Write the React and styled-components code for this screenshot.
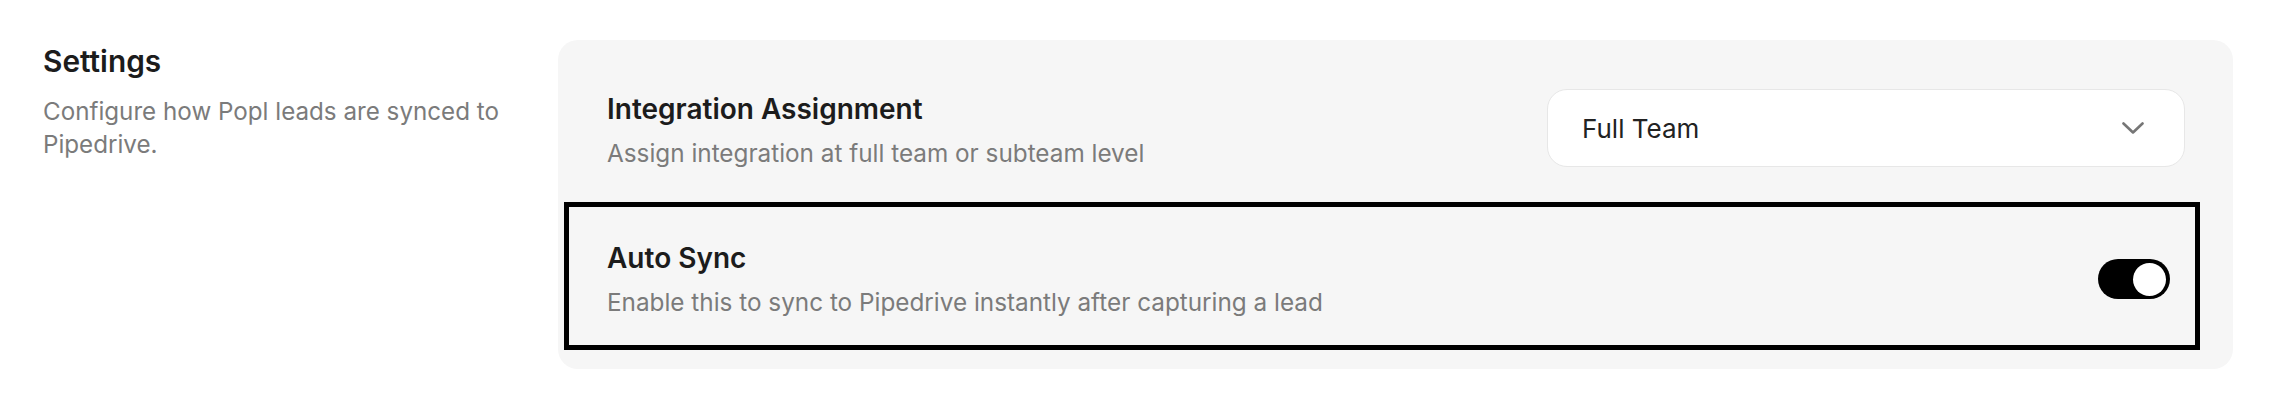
import React, { useState } from "react";
import styled, { createGlobalStyle } from "styled-components";

const GlobalStyle = createGlobalStyle`
  html, body {
    margin: 0;
    padding: 0;
    background: #ffffff;
    font-family: Inter, "Noto Sans", "Liberation Sans", sans-serif;
  }
`;

const Page = styled.div`
  display: grid;
  grid-template-columns: 480px 1fr;
  column-gap: 35px;
  padding: 40px 55px 0 43px;
`;

const Intro = styled.div`
  padding-top: 2px;
`;

const SectionTitle = styled.h2`
  margin: 0;
  font-size: 29.8px;
  line-height: 39px;
  font-weight: 600;
  color: #1c1c1c;
`;

const SectionText = styled.p`
  margin: 14px 0 0;
  font-size: 24.2px;
  line-height: 33px;
  color: #7b7b7b;
`;

const Card = styled.div`
  background: #f6f6f6;
  border-radius: 20px;
  padding: 50px 48px 19px 49px;
`;

const Row = styled.div`
  display: flex;
  justify-content: space-between;
  align-items: ${(p) => (p.$center ? "center" : "flex-start")};
  gap: 40px;
  ${(p) =>
    p.$focused &&
    `
    margin: 32px -15px 0 -43px;
    padding: 32px 25px 26px 38px;
    border: 5px solid #000;
  `}
`;

const Label = styled.div`
  display: flex;
  flex-direction: column;
  gap: 8px;
`;

const RowTitle = styled.div`
  font-size: 28px;
  line-height: 38px;
  font-weight: 600;
  color: #1c1c1c;
`;

const RowText = styled.div`
  font-size: 24.3px;
  line-height: 34px;
  color: #7b7b7b;
`;

const Select = styled.button`
  display: flex;
  align-items: center;
  justify-content: space-between;
  box-sizing: border-box;
  width: 638px;
  height: 78px;
  margin-top: -1px;
  padding: 0 40px 0 34px;
  background: #ffffff;
  border: 1.5px solid #e7e7e7;
  border-radius: 20px;
  font-family: inherit;
  font-size: 26px;
  color: #222;
  cursor: pointer;
`;

const Track = styled.button`
  display: flex;
  align-items: center;
  justify-content: ${(p) => (p.$on ? "flex-end" : "flex-start")};
  box-sizing: border-box;
  width: 72px;
  height: 40px;
  padding: 0 4px;
  border: none;
  border-radius: 20px;
  background: ${(p) => (p.$on ? "#000" : "#d4d4d4")};
  cursor: pointer;
`;

const Knob = styled.span`
  width: 33px;
  height: 33px;
  border-radius: 50%;
  background: #fff;
`;

function Chevron() {
  return (
    <svg width="22" height="13" viewBox="0 0 22 13" fill="none">
      <polyline
        points="1.5,1.5 11,10.5 20.5,1.5"
        stroke="#767676"
        strokeWidth="2.6"
        strokeLinecap="round"
        strokeLinejoin="round"
      />
    </svg>
  );
}

export default function App() {
  const [autoSync, setAutoSync] = useState(true);
  return (
    <>
      <GlobalStyle />
      <Page>
        <Intro>
          <SectionTitle>Settings</SectionTitle>
          <SectionText>Configure how Popl leads are synced to Pipedrive.</SectionText>
        </Intro>
        <Card>
          <Row>
            <Label>
              <RowTitle>Integration Assignment</RowTitle>
              <RowText>Assign integration at full team or subteam level</RowText>
            </Label>
            <Select>
              <span>Full Team</span>
              <Chevron />
            </Select>
          </Row>
          <Row $focused $center>
            <Label>
              <RowTitle>Auto Sync</RowTitle>
              <RowText>Enable this to sync to Pipedrive instantly after capturing a lead</RowText>
            </Label>
            <Track $on={autoSync} onClick={() => setAutoSync(!autoSync)}>
              <Knob />
            </Track>
          </Row>
        </Card>
      </Page>
    </>
  );
}
